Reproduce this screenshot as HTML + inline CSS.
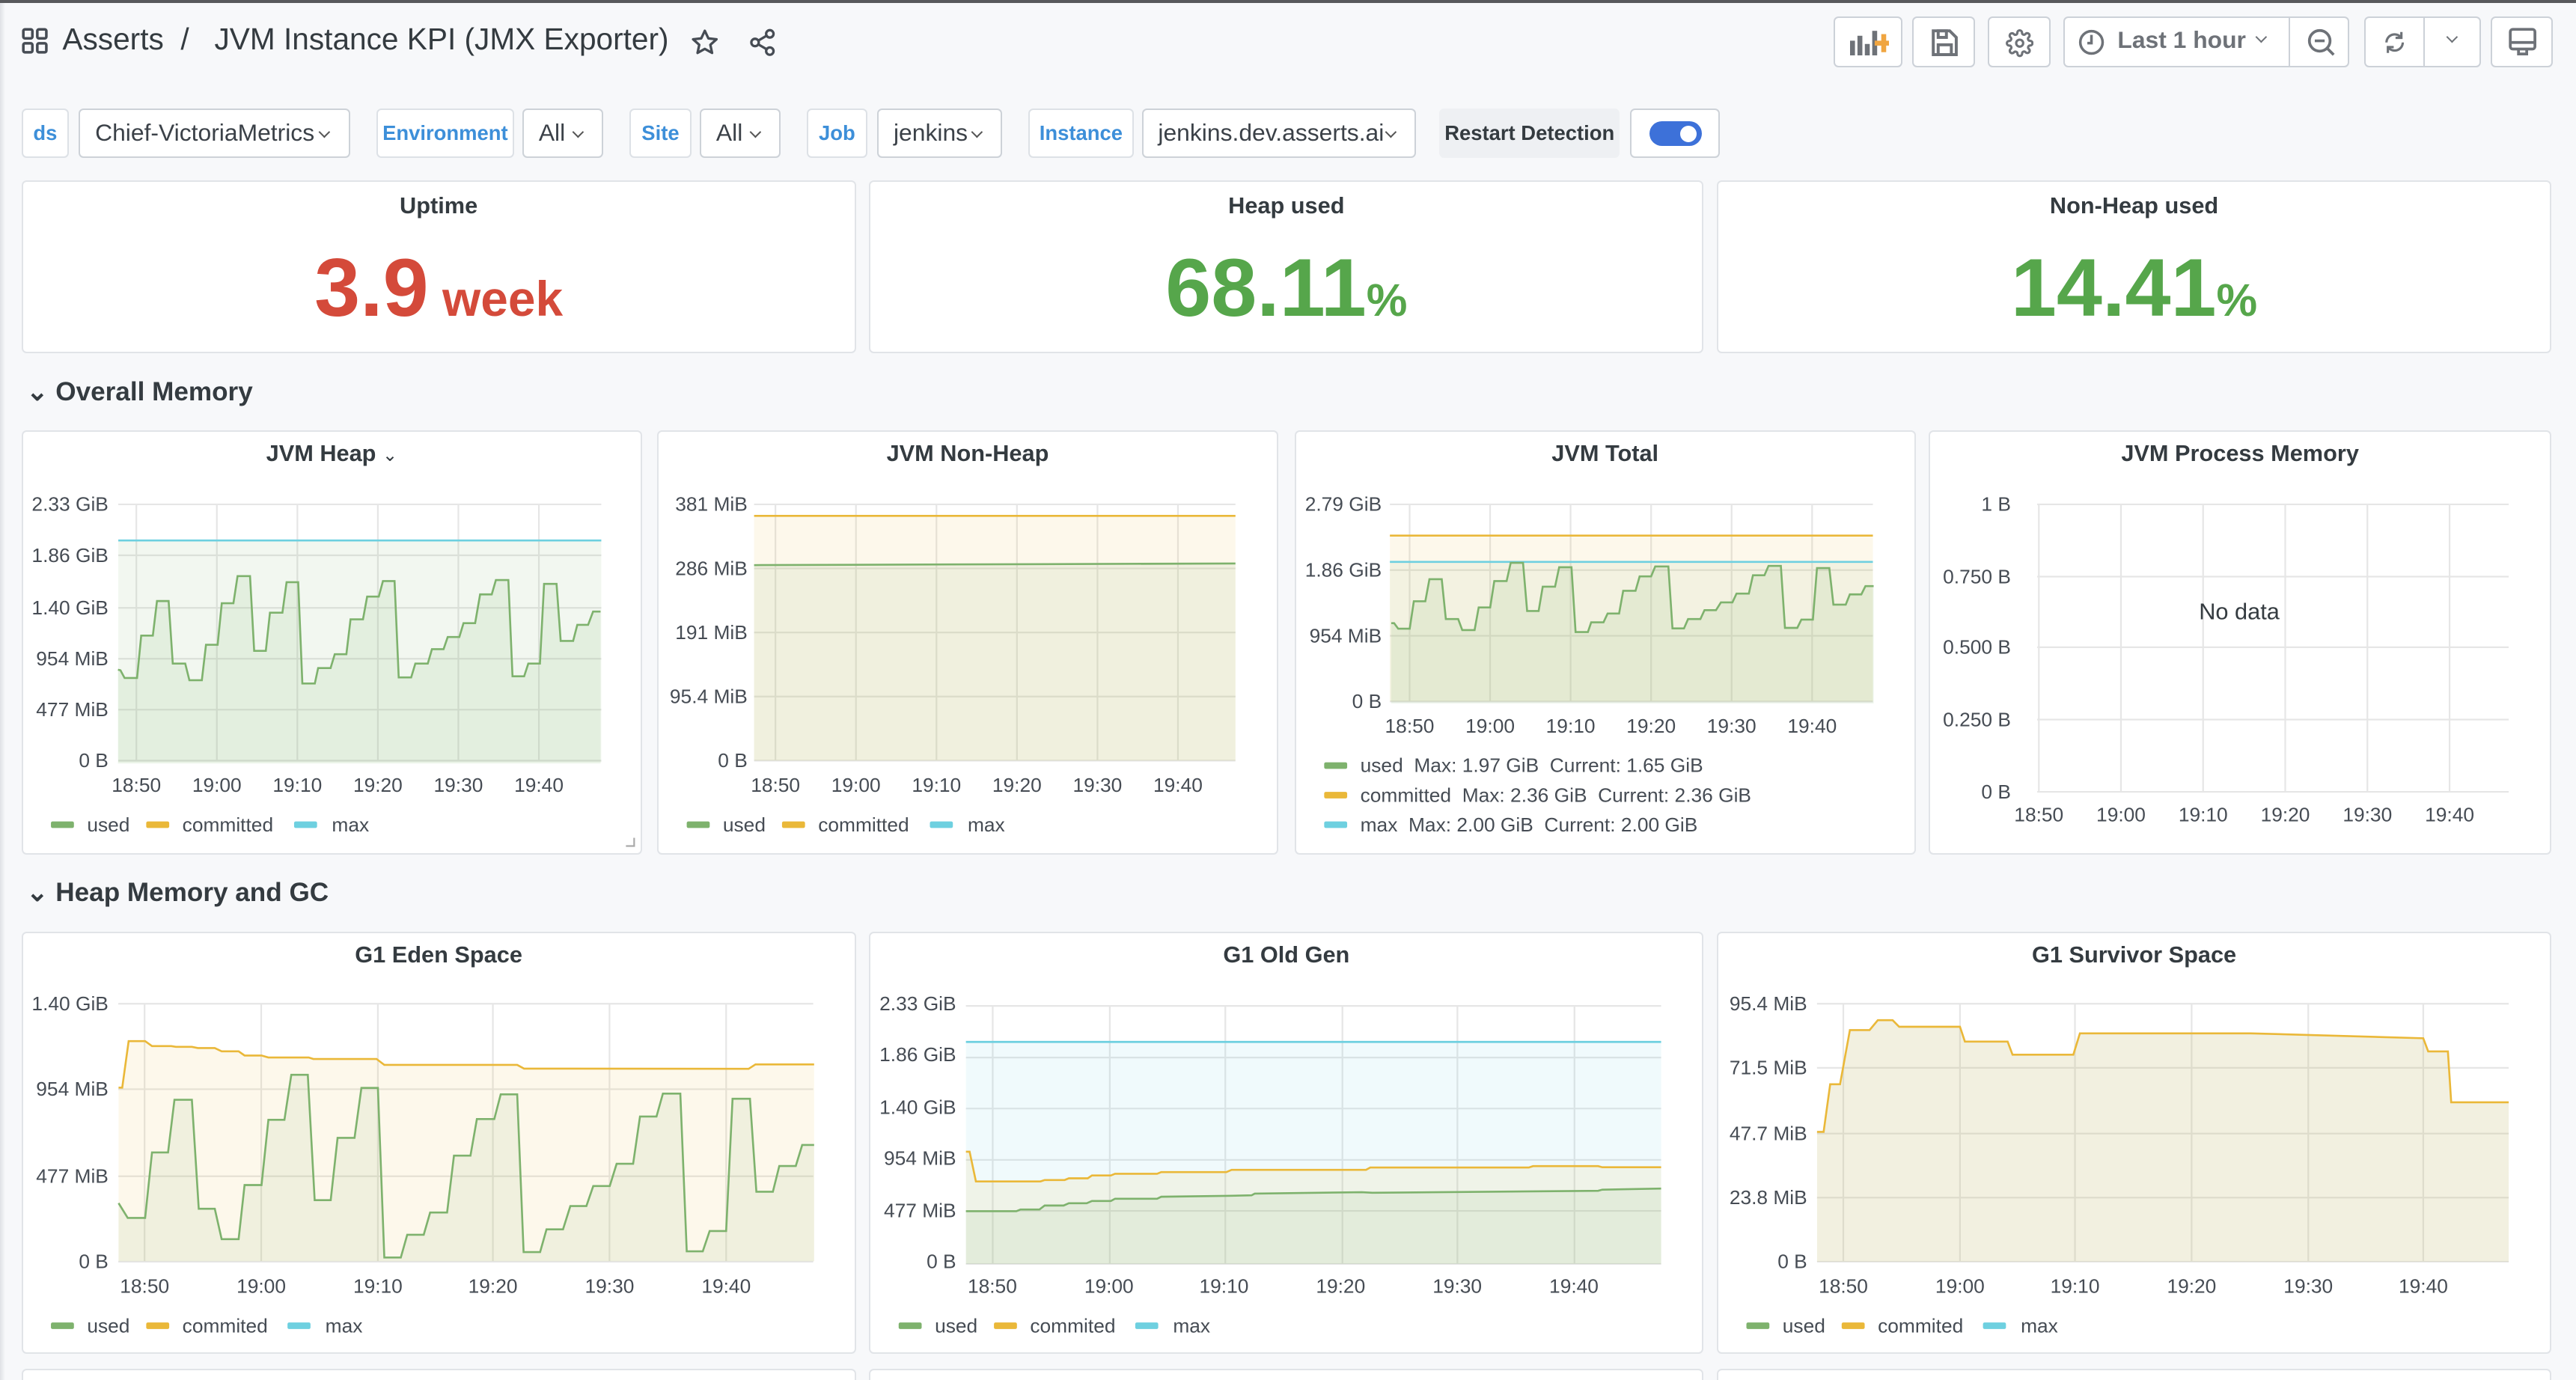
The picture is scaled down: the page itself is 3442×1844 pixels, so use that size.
<!DOCTYPE html>
<html><head><meta charset="utf-8">
<style>
html,body{margin:0;padding:0;width:3442px;height:1844px;overflow:hidden;background:#f7f8fa;}
#root{zoom:2.1952;width:1568px;height:840px;position:relative;font-family:"Liberation Sans",sans-serif;color:#464c54;overflow:hidden;background:#f7f8fa}
.a{position:absolute}
.p{position:absolute;background:#fff;border:1px solid #e1e4e8;border-radius:3px;box-sizing:border-box}
.btn{position:absolute;top:10px;height:31px;background:#fff;border:1px solid #ccd1d8;border-radius:3px;box-sizing:border-box}
.lab{position:absolute;top:66px;height:30px;background:#fff;border:1px solid #dde1e6;border-radius:3px;box-sizing:border-box;color:#3d8fd9;font-size:12.5px;font-weight:bold;line-height:28px;text-align:center}
.sel{position:absolute;top:66px;height:30px;background:#fff;border:1px solid #cdd2d8;border-radius:3px;box-sizing:border-box;color:#3b4148;font-size:14.5px;line-height:28px;padding-left:9px}
.sel:after{content:"";position:absolute;right:12px;top:11px;width:4px;height:4px;border-right:1.3px solid #555;border-bottom:1.3px solid #555;transform:rotate(45deg)}
.pt{position:absolute;left:0;right:0;text-align:center;font-size:14px;font-weight:bold;color:#343b40}
.sv{position:absolute;left:0;right:0;top:36px;text-align:center;white-space:nowrap;font-weight:bold}
</style></head><body><div id="root">
<div class="a" style="left:0;top:0;width:1568px;height:2px;background:#58595c"></div>
<div class="a" style="left:0;top:2px;width:3px;height:838px;background:linear-gradient(90deg,#dfe1e5,#f7f8fa)"></div>

<svg class="a" style="left:13px;top:17px" width="16" height="16" viewBox="0 0 16 16" fill="none" stroke="#464c54" stroke-width="1.6"><rect x="1" y="1" width="5.5" height="5.5" rx="1"/><rect x="9.5" y="1" width="5.5" height="5.5" rx="1"/><rect x="1" y="9.5" width="5.5" height="5.5" rx="1"/><rect x="9.5" y="9.5" width="5.5" height="5.5" rx="1"/></svg>
<div class="a" style="left:38px;top:13px;font-size:18.5px;color:#343b40;white-space:nowrap">Asserts &nbsp;/ &nbsp; JVM Instance KPI (JMX Exporter)</div>
<svg class="a" style="left:420px;top:17px" width="18" height="18" viewBox="0 0 24 24" fill="none" stroke="#464c54" stroke-width="2" stroke-linejoin="round"><path d="M12 2.5l2.9 6.2 6.6.7-5 4.5 1.4 6.6L12 17.2l-5.9 3.3 1.4-6.6-5-4.5 6.6-.7z"/></svg>
<svg class="a" style="left:455px;top:17px" width="18" height="18" viewBox="0 0 24 24" fill="none" stroke="#464c54" stroke-width="2"><circle cx="18" cy="5" r="3"/><circle cx="6" cy="12" r="3"/><circle cx="18" cy="19" r="3"/><path d="M8.6 13.5l6.8 4M15.4 6.5l-6.8 4"/></svg>

<div class="btn" style="left:1116px;width:42px"><svg class="a" style="left:9px;top:7px" width="24" height="16" viewBox="0 0 24 16"><g fill="#6e7278"><rect x="0" y="7" width="3" height="9"/><rect x="4.5" y="4" width="3" height="12"/><rect x="9" y="9" width="3" height="7"/><rect x="13.5" y="1" width="3" height="15"/></g><g fill="#f0a540"><rect x="19" y="3" width="3" height="11"/><rect x="15" y="7" width="11" height="3"/></g></svg></div>
<div class="btn" style="left:1164px;width:38px"><svg class="a" style="left:11px;top:7px" width="16" height="17" viewBox="0 0 16 17" fill="none" stroke="#6e7278" stroke-width="1.8"><path d="M2 1h9l4 4v10.5H1V1z"/><rect x="4" y="1" width="5" height="4"/><rect x="4" y="9.5" width="8" height="6"/></svg></div>
<div class="btn" style="left:1210px;width:38px"><svg class="a" style="left:10px;top:7px" width="17" height="17" viewBox="0 0 24 24" fill="none" stroke="#6e7278" stroke-width="2"><circle cx="12" cy="12" r="3"/><path d="M19.4 15a1.7 1.7 0 0 0 .3 1.8l.1.1a2 2 0 1 1-2.8 2.8l-.1-.1a1.7 1.7 0 0 0-1.8-.3 1.7 1.7 0 0 0-1 1.5V21a2 2 0 1 1-4 0v-.1a1.7 1.7 0 0 0-1.1-1.5 1.7 1.7 0 0 0-1.8.3l-.1.1a2 2 0 1 1-2.8-2.8l.1-.1a1.7 1.7 0 0 0 .3-1.8 1.7 1.7 0 0 0-1.5-1H3a2 2 0 1 1 0-4h.1a1.7 1.7 0 0 0 1.5-1.1 1.7 1.7 0 0 0-.3-1.8l-.1-.1a2 2 0 1 1 2.8-2.8l.1.1a1.7 1.7 0 0 0 1.8.3H9a1.7 1.7 0 0 0 1-1.5V3a2 2 0 1 1 4 0v.1a1.7 1.7 0 0 0 1 1.5 1.7 1.7 0 0 0 1.8-.3l.1-.1a2 2 0 1 1 2.8 2.8l-.1.1a1.7 1.7 0 0 0-.3 1.8V9a1.7 1.7 0 0 0 1.5 1H21a2 2 0 1 1 0 4h-.1a1.7 1.7 0 0 0-1.5 1z"/></svg></div>
<div class="btn" style="left:1256px;width:174px"><svg class="a" style="left:8px;top:7px" width="16" height="16" viewBox="0 0 16 16" fill="none" stroke="#6e7278" stroke-width="1.6"><circle cx="8" cy="8" r="6.8"/><path d="M8 3.5V8.5H5.5"/></svg><span class="a" style="left:32px;top:5px;font-size:14.5px;color:#6e7278;font-weight:bold">Last 1 hour</span><span class="a" style="left:117px;top:9px;width:4px;height:4px;border-right:1.3px solid #6e7278;border-bottom:1.3px solid #6e7278;transform:rotate(45deg)"></span><div class="a" style="left:136px;top:0;width:1px;height:29px;background:#ccd1d8"></div><svg class="a" style="left:147px;top:6px" width="18" height="18" viewBox="0 0 18 18" fill="none" stroke="#6e7278" stroke-width="1.7"><circle cx="8" cy="8" r="6.3"/><path d="M5 8h6M12.5 12.5L16.5 16.5"/></svg></div>
<div class="btn" style="left:1439px;width:71px"><svg class="a" style="left:9px;top:6px" width="17" height="18" viewBox="0 0 24 24" fill="none" stroke="#6e7278" stroke-width="2"><path d="M19 12a7 7 0 0 1-12.5 4.3M5 12a7 7 0 0 1 12.5-4.3"/><path d="M17.8 3v5h-5M6.2 21v-5h5"/></svg><div class="a" style="left:35px;top:0;width:1px;height:29px;background:#ccd1d8"></div><span class="a" style="left:50px;top:9px;width:4px;height:4px;border-right:1.3px solid #6e7278;border-bottom:1.3px solid #6e7278;transform:rotate(45deg)"></span></div>
<div class="btn" style="left:1516px;width:38px"><svg class="a" style="left:10px;top:6px" width="17" height="18" viewBox="0 0 17 18" fill="none" stroke="#6e7278" stroke-width="1.7"><rect x="1" y="1" width="15" height="12" rx="1.5"/><path d="M1 9h15M6 13v3h5v-3"/></svg></div>

<div class="lab" style="left:13px;width:29px">ds</div>
<div class="sel" style="left:48px;width:165px">Chief-VictoriaMetrics</div>
<div class="lab" style="left:229px;width:84px">Environment</div>
<div class="sel" style="left:318px;width:49px">All</div>
<div class="lab" style="left:383px;width:38px">Site</div>
<div class="sel" style="left:426px;width:49px">All</div>
<div class="lab" style="left:491px;width:37px">Job</div>
<div class="sel" style="left:534px;width:76px">jenkins</div>
<div class="lab" style="left:626px;width:64px">Instance</div>
<div class="sel" style="left:695px;width:167px">jenkins.dev.asserts.ai</div>
<div class="a" style="left:876px;top:66px;width:110px;height:30px;background:#eef0f3;border-radius:3px;font-size:12.5px;font-weight:bold;color:#343b40;line-height:30px;text-align:center">Restart Detection</div>
<div class="a" style="left:992px;top:66px;width:55px;height:30px;background:#fff;border:1px solid #cdd2d8;border-radius:3px;box-sizing:border-box"><div class="a" style="left:11px;top:7px;width:32px;height:15px;border-radius:8px;background:#3d71d9"></div><div class="a" style="left:30px;top:9.5px;width:10px;height:10px;border-radius:50%;background:#fff"></div></div>

<div class="p" style="left:13px;top:110px;width:508px;height:105px"><div class="pt" style="top:6px">Uptime</div><div class="sv" style="color:#d44a3a"><span style="font-size:50px">3.9</span><span style="font-size:30px"> week</span></div></div>
<div class="p" style="left:529px;top:110px;width:508px;height:105px"><div class="pt" style="top:6px">Heap used</div><div class="sv" style="color:#56a64b"><span style="font-size:50px">68.11</span><span style="font-size:28px">%</span></div></div>
<div class="p" style="left:1045px;top:110px;width:508px;height:105px"><div class="pt" style="top:6px">Non-Heap used</div><div class="sv" style="color:#56a64b"><span style="font-size:50px">14.41</span><span style="font-size:28px">%</span></div></div>

<div class="a" style="left:16px;top:229px;font-size:16px;font-weight:bold;color:#343b40">&#8964; Overall Memory</div>
<div class="p" style="left:13px;top:262px;width:378px;height:258px"><div class="pt" style="top:5px">JVM Heap <span style="font-weight:normal;font-size:11px">&#8964;</span></div></div>
<div class="p" style="left:400px;top:262px;width:378px;height:258px"><div class="pt" style="top:5px">JVM Non-Heap</div></div>
<div class="p" style="left:788px;top:262px;width:378px;height:258px"><div class="pt" style="top:5px">JVM Total</div></div>
<div class="p" style="left:1174px;top:262px;width:379px;height:258px"><div class="pt" style="top:5px">JVM Process Memory</div></div>

<div class="a" style="left:16px;top:534px;font-size:16px;font-weight:bold;color:#343b40">&#8964; Heap Memory and GC</div>
<div class="p" style="left:13px;top:567px;width:508px;height:257px"><div class="pt" style="top:5px">G1 Eden Space</div></div>
<div class="p" style="left:529px;top:567px;width:508px;height:257px"><div class="pt" style="top:5px">G1 Old Gen</div></div>
<div class="p" style="left:1045px;top:567px;width:508px;height:257px"><div class="pt" style="top:5px">G1 Survivor Space</div></div>
<div class="p" style="left:13px;top:833px;width:508px;height:20px"></div>
<div class="p" style="left:529px;top:833px;width:508px;height:20px"></div>
<div class="p" style="left:1045px;top:833px;width:508px;height:20px"></div>

<svg class="a" style="left:0;top:0" width="1568" height="840" font-family="Liberation Sans, sans-serif" font-size="12" fill="#464c54">
<g stroke="#e6e6e6" stroke-width="1"><path d="M72 307H366M72 338H366M72 370H366M72 401H366M72 432H366M72 463H366M83 307V463M132 307V463M181 307V463M230 307V463M279 307V463M328 307V463"/></g>
<rect x="72" y="329" width="294" height="135" fill="rgba(126,178,109,0.1)"/>
<path d="M72 329H366" stroke="#6ed0e0" stroke-width="1.2"/>
<g transform="translate(0,259.7) scale(0.2528,0.1685)">
<polygon fill="rgba(126,178,109,0.12)" points="284,1217 284,878 290,880 300,908 330,908 340,755 368,755 378,630 406,630 416,856 446,856 456,916 486,916 496,788 524,788 534,638 562,638 572,540 602,540 612,810 640,810 650,672 680,672 690,562 718,562 728,928 758,928 766,872 796,872 806,822 834,822 844,696 874,696 884,614 912,614 922,558 950,558 960,906 990,906 1000,856 1030,856 1040,804 1068,804 1078,760 1106,760 1116,710 1144,710 1156,606 1184,606 1194,554 1224,554 1234,902 1262,902 1272,856 1300,856 1310,568 1340,568 1350,774 1380,774 1390,716 1416,716 1428,668 1446,668 1446,1217"/>
<polyline fill="none" stroke="#7eb26d" stroke-width="1.2" vector-effect="non-scaling-stroke" points="284,878 290,880 300,908 330,908 340,755 368,755 378,630 406,630 416,856 446,856 456,916 486,916 496,788 524,788 534,638 562,638 572,540 602,540 612,810 640,810 650,672 680,672 690,562 718,562 728,928 758,928 766,872 796,872 806,822 834,822 844,696 874,696 884,614 912,614 922,558 950,558 960,906 990,906 1000,856 1030,856 1040,804 1068,804 1078,760 1106,760 1116,710 1144,710 1156,606 1184,606 1194,554 1224,554 1234,902 1262,902 1272,856 1300,856 1310,568 1340,568 1350,774 1380,774 1390,716 1416,716 1428,668 1446,668"/>
</g>
<g text-anchor="end"><text x="66" y="311">2.33 GiB</text><text x="66" y="342">1.86 GiB</text><text x="66" y="374">1.40 GiB</text><text x="66" y="405">954 MiB</text><text x="66" y="436">477 MiB</text><text x="66" y="467">0 B</text></g>
<g text-anchor="middle"><text x="83" y="482">18:50</text><text x="132" y="482">19:00</text><text x="181" y="482">19:10</text><text x="230" y="482">19:20</text><text x="279" y="482">19:30</text><text x="328" y="482">19:40</text></g>
<rect x="31" y="500" width="14" height="4" rx="1" fill="#7eb26d"/><text x="53" y="506">used</text><rect x="89" y="500" width="14" height="4" rx="1" fill="#eab839"/><text x="111" y="506">committed</text><rect x="179" y="500" width="14" height="4" rx="1" fill="#6ed0e0"/><text x="202" y="506">max</text>
<path d="M381 515h5v-5" stroke="#aaa" fill="none" stroke-width="1"/>

<g stroke="#e6e6e6"><path d="M459 307H752M459 346H752M459 385H752M459 424H752M459 463H752M472 307V463M521 307V463M570 307V463M619 307V463M668 307V463M717 307V463"/></g>
<rect x="459" y="314" width="293" height="149" fill="rgba(234,184,57,0.1)"/>
<polygon points="459,344 600,343.5 752,343 752,463 459,463" fill="rgba(126,178,109,0.1)"/>
<path d="M459 314H752" stroke="#eab839" stroke-width="1.2"/>
<path d="M459 344L600 343.5L752 343" stroke="#7eb26d" stroke-width="1.2" fill="none"/>
<g text-anchor="end"><text x="455" y="311">381 MiB</text><text x="455" y="350">286 MiB</text><text x="455" y="389">191 MiB</text><text x="455" y="428">95.4 MiB</text><text x="455" y="467">0 B</text></g>
<g text-anchor="middle"><text x="472" y="482">18:50</text><text x="521" y="482">19:00</text><text x="570" y="482">19:10</text><text x="619" y="482">19:20</text><text x="668" y="482">19:30</text><text x="717" y="482">19:40</text></g>
<rect x="418" y="500" width="14" height="4" rx="1" fill="#7eb26d"/><text x="440" y="506">used</text><rect x="476" y="500" width="14" height="4" rx="1" fill="#eab839"/><text x="498" y="506">committed</text><rect x="566" y="500" width="14" height="4" rx="1" fill="#6ed0e0"/><text x="589" y="506">max</text>

<g stroke="#e6e6e6"><path d="M846 307H1140M846 347H1140M846 387H1140M846 427H1140M858 307V427M907 307V427M956 307V427M1005 307V427M1054 307V427M1103 307V427"/></g>
<rect x="846" y="326" width="294" height="101" fill="rgba(234,184,57,0.1)"/>
<rect x="846" y="342" width="294" height="85" fill="rgba(126,178,109,0.08)"/>
<path d="M846 326H1140" stroke="#eab839" stroke-width="1.2"/>
<path d="M846 342H1140" stroke="#6ed0e0" stroke-width="1.2"/>
<g transform="translate(783.6,259.7) scale(0.2499,0.1685)">
<polygon fill="rgba(126,178,109,0.12)" points="253,1000 253,710 260,710 270,730 298,730 308,631 336,631 346,551 376,551 386,695 416,695 426,735 456,735 466,653 494,653 504,558 534,558 544,492 574,492 584,666 612,666 622,578 652,578 662,508 692,508 702,742 732,742 740,707 770,707 780,675 808,675 818,593 848,593 858,541 886,541 896,505 928,505 938,729 966,729 976,695 1006,695 1016,663 1044,663 1056,635 1084,635 1094,603 1124,603 1134,537 1162,537 1172,503 1202,503 1212,727 1242,727 1252,697 1280,697 1290,511 1320,511 1330,643 1360,643 1370,606 1398,606 1408,576 1428,576 1428,1000"/>
<polyline fill="none" stroke="#7eb26d" stroke-width="1.2" vector-effect="non-scaling-stroke" points="253,710 260,710 270,730 298,730 308,631 336,631 346,551 376,551 386,695 416,695 426,735 456,735 466,653 494,653 504,558 534,558 544,492 574,492 584,666 612,666 622,578 652,578 662,508 692,508 702,742 732,742 740,707 770,707 780,675 808,675 818,593 848,593 858,541 886,541 896,505 928,505 938,729 966,729 976,695 1006,695 1016,663 1044,663 1056,635 1084,635 1094,603 1124,603 1134,537 1162,537 1172,503 1202,503 1212,727 1242,727 1252,697 1280,697 1290,511 1320,511 1330,643 1360,643 1370,606 1398,606 1408,576 1428,576"/>
</g>
<g text-anchor="end"><text x="841" y="311">2.79 GiB</text><text x="841" y="351">1.86 GiB</text><text x="841" y="391">954 MiB</text><text x="841" y="431">0 B</text></g>
<g text-anchor="middle"><text x="858" y="446">18:50</text><text x="907" y="446">19:00</text><text x="956" y="446">19:10</text><text x="1005" y="446">19:20</text><text x="1054" y="446">19:30</text><text x="1103" y="446">19:40</text></g>
<rect x="806" y="464" width="14" height="4" rx="1" fill="#7eb26d"/><text x="828" y="470">used&#160; Max: 1.97 GiB&#160; Current: 1.65 GiB</text>
<rect x="806" y="482" width="14" height="4" rx="1" fill="#eab839"/><text x="828" y="488">committed&#160; Max: 2.36 GiB&#160; Current: 2.36 GiB</text>
<rect x="806" y="500" width="14" height="4" rx="1" fill="#6ed0e0"/><text x="828" y="506">max&#160; Max: 2.00 GiB&#160; Current: 2.00 GiB</text>

<g stroke="#e6e6e6"><path d="M1240 307H1527M1240 351H1527M1240 394H1527M1240 438H1527M1240 482H1527M1241 307V482M1291 307V482M1341 307V482M1391 307V482M1441 307V482M1491 307V482"/></g>
<g text-anchor="end"><text x="1224" y="311">1 B</text><text x="1224" y="355">0.750 B</text><text x="1224" y="398">0.500 B</text><text x="1224" y="442">0.250 B</text><text x="1224" y="486">0 B</text></g>
<g text-anchor="middle"><text x="1241" y="500">18:50</text><text x="1291" y="500">19:00</text><text x="1341" y="500">19:10</text><text x="1391" y="500">19:20</text><text x="1441" y="500">19:30</text><text x="1491" y="500">19:40</text></g>
<text x="1363" y="377" text-anchor="middle" font-size="14" fill="#343b40">No data</text>

<g stroke="#e6e6e6"><path d="M72 611H495M72 663H495M72 716H495M72 768H495M88 611V768M159 611V768M230 611V768M300 611V768M371 611V768M442 611V768"/></g>
<g transform="translate(63.8,601.4) scale(0.2789,0.1505)">
<polygon fill="rgba(234,184,57,0.1)" points="30,1105 30,403 38,403 52,215 88,215 103,235 145,235 155,238 190,238 203,243 240,243 255,256 292,256 305,273 342,273 357,281 445,281 455,287 593,287 610,311 900,311 915,326 1405,327 1420,309 1548,309 1548,1105"/>
<polyline fill="none" stroke="#eab839" stroke-width="1.2" vector-effect="non-scaling-stroke" points="30,403 38,403 52,215 88,215 103,235 145,235 155,238 190,238 203,243 240,243 255,256 292,256 305,273 342,273 357,281 445,281 455,287 593,287 610,311 900,311 915,326 1405,327 1420,309 1548,309"/>
<polygon fill="rgba(126,178,109,0.1)" points="30,1105 30,870 50,930 88,930 103,665 138,665 152,452 190,452 205,893 240,893 255,1016 292,1016 305,797 342,797 357,533 392,533 407,351 443,351 458,858 493,858 508,606 545,606 560,404 596,404 610,1090 646,1090 660,998 696,998 710,908 747,908 762,678 798,678 812,530 850,530 864,430 900,430 914,1068 950,1068 964,976 1000,976 1016,882 1051,882 1066,801 1102,801 1117,711 1153,711 1168,520 1204,520 1218,427 1256,427 1270,1065 1305,1065 1320,983 1356,983 1370,448 1408,448 1422,824 1458,824 1472,720 1508,720 1522,635 1548,635 1548,1105"/>
<polyline fill="none" stroke="#7eb26d" stroke-width="1.2" vector-effect="non-scaling-stroke" points="30,870 50,930 88,930 103,665 138,665 152,452 190,452 205,893 240,893 255,1016 292,1016 305,797 342,797 357,533 392,533 407,351 443,351 458,858 493,858 508,606 545,606 560,404 596,404 610,1090 646,1090 660,998 696,998 710,908 747,908 762,678 798,678 812,530 850,530 864,430 900,430 914,1068 950,1068 964,976 1000,976 1016,882 1051,882 1066,801 1102,801 1117,711 1153,711 1168,520 1204,520 1218,427 1256,427 1270,1065 1305,1065 1320,983 1356,983 1370,448 1408,448 1422,824 1458,824 1472,720 1508,720 1522,635 1548,635"/>
</g>
<g text-anchor="end"><text x="66" y="615">1.40 GiB</text><text x="66" y="667">954 MiB</text><text x="66" y="720">477 MiB</text><text x="66" y="772">0 B</text></g>
<g text-anchor="middle"><text x="88" y="787">18:50</text><text x="159" y="787">19:00</text><text x="230" y="787">19:10</text><text x="300" y="787">19:20</text><text x="371" y="787">19:30</text><text x="442" y="787">19:40</text></g>
<rect x="31" y="805" width="14" height="4" rx="1" fill="#7eb26d"/><text x="53" y="811">used</text><rect x="89" y="805" width="14" height="4" rx="1" fill="#eab839"/><text x="111" y="811">commited</text><rect x="175" y="805" width="14" height="4" rx="1" fill="#6ed0e0"/><text x="198" y="811">max</text>

<g transform="translate(528.5,569.5) scale(0.3196,0.1726)">
<g stroke="#e6e6e6" stroke-width="5.8"><path d="M186 248H1510M186 430H1510M186 610H1510M186 791H1510M186 971H1510M186 1158H1510"/></g>
<g stroke="#e6e6e6" stroke-width="3.2"><path d="M237 248V1158M460 248V1158M680 248V1158M903 248V1158M1122 248V1158M1345 248V1158"/></g>
<rect x="186" y="375" width="1324" height="783" fill="rgba(110,208,224,0.1)"/>
<polyline fill="none" stroke="#6ed0e0" stroke-width="1.2" vector-effect="non-scaling-stroke" points="186,375 1510,375"/>
<polygon fill="rgba(234,184,57,0.1)" points="186,1158 186,762 193,762 205,867 328,867 336,862 374,862 382,856 418,856 426,846 462,846 470,840 550,840 558,834 682,834 692,826 948,826 956,818 1258,818 1266,813 1390,813 1398,817 1510,817 1510,1158"/>
<polyline fill="none" stroke="#eab839" stroke-width="1.2" vector-effect="non-scaling-stroke" points="186,762 193,762 205,867 328,867 336,862 374,862 382,856 418,856 426,846 462,846 470,840 550,840 558,834 682,834 692,826 948,826 956,818 1258,818 1266,813 1390,813 1398,817 1510,817"/>
<polygon fill="rgba(126,178,109,0.1)" points="186,1158 186,972 282,972 290,966 326,966 336,952 372,952 382,944 416,944 426,936 462,936 470,928 550,928 558,921 682,918 730,916 736,910 940,905 960,907 1390,900 1398,896 1510,892 1510,1158"/>
<polyline fill="none" stroke="#7eb26d" stroke-width="1.2" vector-effect="non-scaling-stroke" points="186,972 282,972 290,966 326,966 336,952 372,952 382,944 416,944 426,936 462,936 470,928 550,928 558,921 682,918 730,916 736,910 940,905 960,907 1390,900 1398,896 1510,892"/>
</g>
<g text-anchor="end"><text x="582" y="615">2.33 GiB</text><text x="582" y="646">1.86 GiB</text><text x="582" y="678">1.40 GiB</text><text x="582" y="709">954 MiB</text><text x="582" y="741">477 MiB</text><text x="582" y="772">0 B</text></g>
<g text-anchor="middle"><text x="604" y="787">18:50</text><text x="675" y="787">19:00</text><text x="745" y="787">19:10</text><text x="816" y="787">19:20</text><text x="887" y="787">19:30</text><text x="958" y="787">19:40</text></g>
<rect x="547" y="805" width="14" height="4" rx="1" fill="#7eb26d"/><text x="569" y="811">used</text><rect x="605" y="805" width="14" height="4" rx="1" fill="#eab839"/><text x="627" y="811">commited</text><rect x="691" y="805" width="14" height="4" rx="1" fill="#6ed0e0"/><text x="714" y="811">max</text>

<g stroke="#e6e6e6"><path d="M1106 611H1527M1106 650H1527M1106 690H1527M1106 729H1527M1106 768H1527M1122 611V768M1193 611V768M1263 611V768M1334 611V768M1405 611V768M1475 611V768"/></g>
<polygon fill="rgba(190,180,100,0.2)" points="1106,768 1106,689 1110,689 1114,660 1120,660 1126,627 1138,627 1143,621 1152,621 1156,625 1193,625 1196,634 1222,634 1225,642 1262,642 1266,629 1370,629 1475,632 1478,640 1490,640 1492,671 1527,671 1527,768"/>
<polyline fill="none" stroke="#eab839" stroke-width="1.2" points="1106,689 1110,689 1114,660 1120,660 1126,627 1138,627 1143,621 1152,621 1156,625 1193,625 1196,634 1222,634 1225,642 1262,642 1266,629 1370,629 1475,632 1478,640 1490,640 1492,671 1527,671"/>
<g text-anchor="end"><text x="1100" y="615">95.4 MiB</text><text x="1100" y="654">71.5 MiB</text><text x="1100" y="694">47.7 MiB</text><text x="1100" y="733">23.8 MiB</text><text x="1100" y="772">0 B</text></g>
<g text-anchor="middle"><text x="1122" y="787">18:50</text><text x="1193" y="787">19:00</text><text x="1263" y="787">19:10</text><text x="1334" y="787">19:20</text><text x="1405" y="787">19:30</text><text x="1475" y="787">19:40</text></g>
<rect x="1063" y="805" width="14" height="4" rx="1" fill="#7eb26d"/><text x="1085" y="811">used</text><rect x="1121" y="805" width="14" height="4" rx="1" fill="#eab839"/><text x="1143" y="811">commited</text><rect x="1207" y="805" width="14" height="4" rx="1" fill="#6ed0e0"/><text x="1230" y="811">max</text>
</svg>
</div></body></html>
